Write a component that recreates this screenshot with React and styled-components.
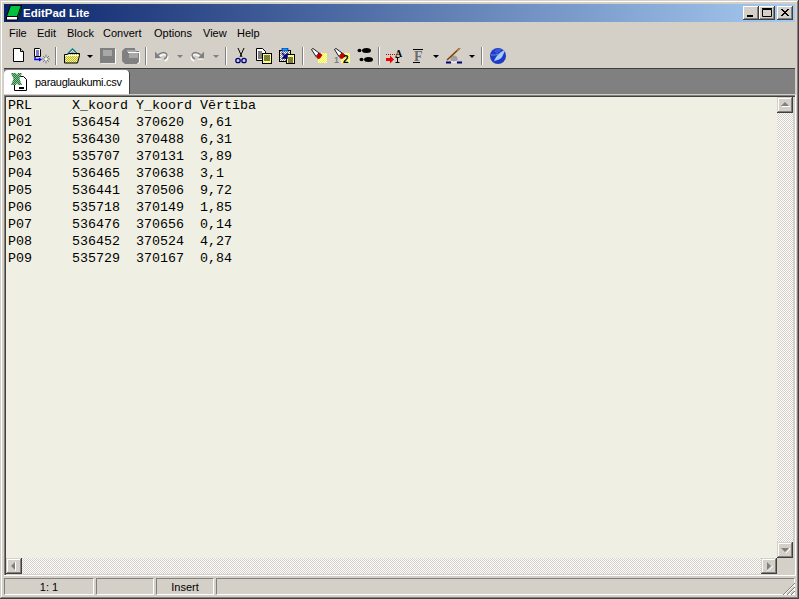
import React from "react";
import styled, { createGlobalStyle } from "styled-components";

const FACE = "#d4d0c8";
const SHADOW = "#808080";
const DARK = "#404040";
const UI_FONT = `"Liberation Sans", Arial, sans-serif`;

const GlobalStyle = createGlobalStyle`
  html, body { margin: 0; padding: 0; background: ${FACE}; overflow: hidden; }
`;

const Window = styled.div`
  box-sizing: border-box;
  width: 799px;
  height: 599px;
  padding: 4px 3px 3px 4px;
  display: flex;
  flex-direction: column;
  background: ${FACE};
  font-family: ${UI_FONT};
  font-size: 11px;
  color: #000;
  box-shadow: inset -1px -1px ${DARK}, inset 1px 1px ${FACE}, inset -2px -2px ${SHADOW}, inset 2px 2px #fff;
`;

const TitleBar = styled.div`
  height: 18px;
  margin-right: 1px;
  display: flex;
  align-items: center;
  padding: 0 2px;
  background: linear-gradient(90deg, #0a246a, #a6caf0);
  color: #fff;
  font-weight: bold;
  font-size: 11.5px;
`;

const TitleText = styled.span`
  margin-left: 1px;
  flex: 1;
`;

const CaptionButtons = styled.div`
  display: flex;
`;

const CaptionButton = styled.div`
  width: 16px;
  height: 14px;
  margin-left: ${(p) => p.$gap}px;
  background: ${FACE};
  box-shadow: inset -1px -1px ${DARK}, inset 1px 1px #fff, inset -2px -2px ${SHADOW};
`;

const MenuBar = styled.div`
  height: 22px;
  display: flex;
  align-items: center;
  padding-left: 5px;
`;

const MenuItem = styled.span`
  width: ${(p) => p.$w}px;
  line-height: 20px;
`;

const Toolbar = styled.div`
  height: 24px;
  display: flex;
  align-items: center;
  padding-left: 3px;
`;

const ToolButton = styled.div`
  width: 23px;
  height: 24px;
  display: flex;
  align-items: center;
  justify-content: center;
`;

const DropSlot = styled.div`
  width: 13px;
  height: 24px;
  display: flex;
  align-items: center;
  justify-content: center;
`;

const DropArrow = styled.i`
  display: block;
  width: 0;
  height: 0;
  border-left: 3px solid transparent;
  border-right: 3px solid transparent;
  border-top: 3px solid ${(p) => (p.$off ? SHADOW : "#000")};
`;

const Separator = styled.div`
  box-sizing: border-box;
  width: 2px;
  height: 18px;
  margin-left: ${(p) => p.$l}px;
  margin-right: ${(p) => p.$r}px;
  border-left: 1px solid ${SHADOW};
  border-right: 1px solid #fff;
`;

const Glyph = styled.svg`
  display: block;
  width: ${(p) => p.$w || 16}px;
  height: ${(p) => p.$h || 16}px;
  flex: none;
`;

const MirrorGlyph = styled(Glyph)`
  transform: ${(p) => (p.$flip ? "scaleX(-1)" : "none")};
`;

const TabStrip = styled.div`
  height: 24px;
  margin-right: 1px;
  padding-top: 1px;
  background: ${SHADOW};
  border-top: 1px solid ${DARK};
  border-bottom: 1px solid ${FACE};
  display: flex;
`;

const Tab = styled.div`
  width: 126px;
  display: flex;
  align-items: center;
  padding-left: 7px;
  box-sizing: border-box;
  background: #fff;
  border-radius: 4px 4px 0 0;
  border-right: 1px solid ${DARK};
`;

const TabLabel = styled.span`
  margin-left: 8px;
  letter-spacing: -0.3px;
  white-space: nowrap;
`;

const EditorFrame = styled.div`
  box-sizing: border-box;
  height: 481px;
  padding: 2px 3px 2px 2px;
  display: grid;
  grid-template-columns: 1fr 16px;
  grid-template-rows: 1fr 16px;
  background: ${FACE};
  box-shadow: inset -1px -1px #fff, inset 1px 1px ${SHADOW}, inset 2px 2px ${DARK};
`;

const TextPane = styled.div`
  background: #eff0e3;
  padding-left: 2px;
  overflow: hidden;
  font-family: "Liberation Mono", "Courier New", monospace;
  font-size: 13.33px;
  line-height: 17px;
`;

const TextLine = styled.div`
  display: grid;
  grid-template-columns: repeat(4, 64px);
  height: 17px;
  white-space: pre;
`;

const ScrollTrack = styled.div`
  display: flex;
  flex-direction: ${(p) => (p.$vertical ? "column" : "row")};
  justify-content: space-between;
  background: repeating-conic-gradient(#fff 0% 25%, ${FACE} 0% 50%) 0 0 / 2px 2px;
`;

const ScrollButton = styled.div`
  width: 16px;
  height: 16px;
  background: ${FACE};
  box-shadow: inset -1px -1px ${DARK}, inset 1px 1px ${FACE}, inset -2px -2px ${SHADOW}, inset 2px 2px #fff;
`;

const StatusBar = styled.div`
  position: relative;
  height: 17px;
  margin: 2px 1px 0 0;
  display: flex;
  gap: 2px;
`;

const StatusPanel = styled.div`
  box-sizing: border-box;
  width: ${(p) => (p.$w ? `${p.$w}px` : "auto")};
  flex: ${(p) => (p.$w ? "none" : 1)};
  line-height: 16px;
  text-align: center;
  border: 1px solid;
  border-color: ${SHADOW} #fff #fff ${SHADOW};
`;

const SizeGrip = styled.svg`
  position: absolute;
  right: 0;
  bottom: 0;
  width: 13px;
  height: 13px;
`;

const Dither = ({ id, a = "#fff", b = "#ffff00" }) => (
  <pattern id={id} width="2" height="2" patternUnits="userSpaceOnUse">
    <rect width="2" height="2" fill={a} />
    <rect width="1" height="1" fill={b} />
    <rect x="1" y="1" width="1" height="1" fill={b} />
  </pattern>
);

const Icon = ({ children, w, h }) => (
  <Glyph $w={w} $h={h} viewBox={`0 0 ${w || 16} ${h || 16}`}>{children}</Glyph>
);

const NewIcon = () => (
  <Icon>
    <path d="M2.5.5h7l3 3v10h-10z" fill="#fff" stroke="#000" />
    <path d="M9.5.5v3h3" fill="#d4d0c8" stroke="#000" />
  </Icon>
);

const OpenRemoteIcon = () => (
  <Icon>
    <path d="M.5.5h5l1 1v7h-6z" fill="#fff" stroke="#000" />
    <path d="M2 3h3M2 5h3M2 7h3" stroke="#000080" />
    <path d="M1 9v2.5h5" fill="none" stroke="#0000ff" strokeWidth="1.4" />
    <path d="M5 9.5l3 2-3 2z" fill="#0000ff" />
    <path d="M12 6.5v9M7.5 11h9M9 8l6 6M15 8l-6 6" stroke="#808080" />
    <circle cx="12" cy="11" r="1.5" fill="#fff" />
  </Icon>
);

const FolderIcon = () => (
  <Icon>
    <defs><Dither id="fold" a="#ffff60" b="#b0b060" /></defs>
    <path d="M3.5 6L8.5 1 13.5 6" fill="#fff" stroke="#008080" strokeWidth="1.3" />
    <path d="M6 5L8.5 3 11 5z" fill="#a0a0a0" />
    <path d="M.5 6.5h3l1-1h11v2l-2 7.5h-13z" fill="url(#fold)" stroke="#000" />
    <path d="M1 7.5h13" stroke="#fff" />
  </Icon>
);

const SaveIcon = () => (
  <Icon>
    <rect x="0" y="0" width="15" height="15" fill="#808080" />
    <rect x="3" y="2" width="9" height="6" fill="#a8a8a8" />
    <path d="M15.5 1v15H1" fill="none" stroke="#fff" />
  </Icon>
);

const SaveAllIcon = () => (
  <Glyph $w={18} viewBox="0 0 18 16">
    <path d="M0 3l3-3h10v3h4v11l-2 2H3l-3-3z" fill="#808080" />
    <rect x="5" y="2" width="9" height="2" fill="#a8a8a8" />
    <rect x="7" y="5" width="9" height="5" fill="#a8a8a8" />
    <path d="M6 4.5h11" stroke="#fff" />
    <path d="M17.5 4v10l-2 2" fill="none" stroke="#fff" />
  </Glyph>
);

const UndoIcon = ({ flip }) => (
  <MirrorGlyph $w={15} $flip={flip} viewBox="0 0 15 16">
    <path d="M4 8c3-3 7-3 8.5-1 1 2-.5 4-2.5 5" fill="none" stroke="#fff" strokeWidth="1.5" transform="translate(.8 1)" />
    <path d="M4 7c3-3 7-3 8.5-1 1 2-.5 4-2.5 5" fill="none" stroke="#808080" strokeWidth="1.5" />
    <path d="M1 3.5v7h6.5z" fill="#808080" />
    <path d="M1.5 11h6" stroke="#fff" />
  </MirrorGlyph>
);

const CutIcon = () => (
  <Icon>
    <path d="M5 0l4 9M11 0L7 9" stroke="#000" />
    <circle cx="5" cy="12.5" r="2.2" fill="none" stroke="#000080" strokeWidth="1.3" />
    <circle cx="11" cy="12.5" r="2.2" fill="none" stroke="#000080" strokeWidth="1.3" />
  </Icon>
);

const CopyIcon = () => (
  <Icon>
    <defs><Dither id="cp" /></defs>
    <path d="M.5.5h6l3 3v9h-9z" fill="#fff" stroke="#000" />
    <path d="M2 4h4M2 6h4M2 8h4M2 10h4" stroke="#000" />
    <rect x="6.5" y="5.5" width="9" height="10" fill="url(#cp)" stroke="#000" />
    <path d="M8 8h6M8 10h6M8 12h6" stroke="#000" />
  </Icon>
);

const PasteIcon = () => (
  <Icon>
    <defs><Dither id="ps" a="#fff" b="#808080" /><Dither id="ps2" /></defs>
    <rect x=".5" y="2.5" width="11" height="11" fill="url(#ps)" stroke="#000" />
    <rect x="3" y="0" width="6" height="3" fill="#00a0ff" stroke="#000080" strokeWidth=".6" />
    <rect x="7.5" y="6.5" width="8" height="9" fill="url(#ps2)" stroke="#000" />
    <path d="M9 10h5M9 12h5M9 14h5" stroke="#000" />
    <path d="M3 5l4 4M8 6v4H4z" stroke="#000080" strokeWidth="1.5" fill="#000080" />
  </Icon>
);

const Torch = () => (
  <>
    <path d="M.5 1.5L2 .5l6 4.5-3 3.5z" fill="#fff" stroke="#000" strokeWidth=".9" />
    <path d="M5 9l3.5-4.500L11.5 7l-2.5 3.5-2 .5z" fill="#c00000" />
  </>
);

const FindIcon = () => (
  <Icon>
    <defs><Dither id="f1" /></defs>
    <path d="M10 5h6v10H7V9z" fill="url(#f1)" />
    <Torch />
  </Icon>
);

const Find2Icon = () => (
  <Icon>
    <defs><Dither id="f2" /></defs>
    <path d="M10 5h6v10H7V9z" fill="url(#f2)" />
    <Torch />
    <text x="0" y="15" fontFamily="Liberation Sans" fontWeight="bold" fontSize="9" fill="#808080">1</text>
    <text x="9" y="15" fontFamily="Liberation Sans" fontWeight="bold" fontSize="10" fill="#000">2</text>
  </Icon>
);

const StepsIcon = () => (
  <Icon>
    <ellipse cx="2.5" cy="2.5" rx="2" ry="1.8" />
    <ellipse cx="9.5" cy="2.5" rx="4.5" ry="2.5" />
    <ellipse cx="4.5" cy="11.5" rx="2" ry="1.8" />
    <ellipse cx="11.5" cy="11.5" rx="4.5" ry="2.5" />
  </Icon>
);

const FontAIcon = () => (
  <Glyph $w={18} viewBox="0 0 18 16">
    <text x="9" y="9" fontFamily="Liberation Serif" fontWeight="bold" fontSize="10" fill="#000">A</text>
    <path d="M0 6.5h9" stroke="#c00000" strokeDasharray="1 1" />
    <path d="M9.5 9.5h4M11.5 9.5v5M9.5 14.5h4" stroke="#000" />
    <path d="M0 10h4V7.5l4 4-4 4V13H0z" fill="#f00000" />
  </Glyph>
);

const FontFIcon = () => (
  <Icon>
    <path d="M3 1.5h10M3 14.5h7" stroke="#000" />
    <text x="4" y="13" fontFamily="Liberation Serif" fontWeight="bold" fontSize="14" fill="#6c6c6c">F</text>
  </Icon>
);

const BrushIcon = () => (
  <Icon>
    <circle cx="8" cy="11" r="3.5" fill="#a0a0a0" />
    <path d="M1 12L14 0" stroke="#804000" strokeWidth="1.6" />
    <path d="M14 0l-3 3" stroke="#c08040" />
    <path d="M5.5 13a3 3 0 0 0 5 0" fill="none" stroke="#fff" strokeWidth="1.3" />
    <path d="M0 14.5h5M11 14.5h5" stroke="#000080" strokeWidth="2" />
  </Icon>
);

const GlobeIcon = () => (
  <Icon>
    <circle cx="8" cy="8" r="8" fill="#1c3cc8" />
    <path d="M4 3a7 7 0 0 1 8-1.5L7 6z" fill="#3858d8" />
    <path d="M15 2C11 3 6 8 4 13c3-1 6-1 8-4 1-2 2-4 3-7z" fill="#a8ccf4" />
    <path d="M1 7c3 0 6 0 8-1" stroke="#7090e0" fill="none" />
  </Icon>
);

const AppIcon = () => (
  <Glyph viewBox="0 0 16 16">
    <path d="M4.5.5h11l-4 11H.5z" fill="#00c040" stroke="#000" />
    <path d="M.5 11.5h11v3.5H.5z" fill="#fff" stroke="#000" />
    <path d="M11.5 11.5l4-11v3l-4 11.5z" fill="#008030" stroke="#000" strokeWidth=".6" />
  </Glyph>
);

const CsvIcon = () => (
  <Glyph $h={18} viewBox="0 0 16 18">
    <defs><Dither id="xl" a="#1f7a3c" b="#88c090" /></defs>
    <path d="M3.5 3.5h9l3 3v11h-12z" fill="#fff" stroke="#000" />
    <path d="M0 0h5l1 2 1-2h4L8.500 6l2.500 6H7l-1-2-1 2H0l2.500-6z" fill="url(#xl)" />
    <path d="M8 14h5v2H8z" fill="#000" />
  </Glyph>
);

const CaptionIcon = ({ kind }) => (
  <Glyph $w={16} $h={14} viewBox="0 0 16 14">
    {kind === "min" && <rect x="4" y="9" width="6" height="2" fill="#000" />}
    {kind === "max" && <path d="M3.5 3.5h9v7h-9zM3 2.5h10" fill="none" stroke="#000" />}
    {kind === "close" && <path d="M4 3l7 7M5 3l7 7M11 3l-7 7M12 3l-7 7" stroke="#000" />}
  </Glyph>
);

const ARROWS = {
  up: { tri: "8,5 4,9 12,9", hi: "M5 9.5h8" },
  down: { tri: "4,6 12,6 8,10", hi: "M9 10.5h1M10 9.5h1M11 8.5h1M12 7.5h1M13 6.5h-1" },
  left: { tri: "9,4 9,12 5,8", hi: "M9.5 4v9" },
  right: { tri: "6,4 6,12 10,8", hi: "M6.5 12.5h1M8 11.5h1M9 10.5h1M10 9.5h1M11 8.5h1" },
};

const ScrollArrow = ({ dir }) => (
  <ScrollButton>
    <Glyph viewBox="0 0 16 16">
      <polygon points={ARROWS[dir].tri} fill={SHADOW} />
      <path d={ARROWS[dir].hi} stroke="#fff" fill="none" />
    </Glyph>
  </ScrollButton>
);

const MENUS = [
  ["File", 28], ["Edit", 30], ["Block", 36], ["Convert", 51],
  ["Options", 49], ["View", 34], ["Help", 40],
];

const ROWS = [
  ["PRL", "X_koord", "Y_koord", "Vērtība"],
  ["P01", "536454", "370620", "9,61"],
  ["P02", "536430", "370488", "6,31"],
  ["P03", "535707", "370131", "3,89"],
  ["P04", "536465", "370638", "3,1"],
  ["P05", "536441", "370506", "9,72"],
  ["P06", "535718", "370149", "1,85"],
  ["P07", "536476", "370656", "0,14"],
  ["P08", "536452", "370524", "4,27"],
  ["P09", "535729", "370167", "0,84"],
];

function App() {
  return (
    <Window>
      <GlobalStyle />
      <TitleBar>
        <AppIcon />
        <TitleText>EditPad Lite</TitleText>
        <CaptionButtons>
          <CaptionButton $gap={0}><CaptionIcon kind="min" /></CaptionButton>
          <CaptionButton $gap={0}><CaptionIcon kind="max" /></CaptionButton>
          <CaptionButton $gap={2}><CaptionIcon kind="close" /></CaptionButton>
        </CaptionButtons>
      </TitleBar>

      <MenuBar>
        {MENUS.map(([label, w]) => (
          <MenuItem key={label} $w={w}>{label}</MenuItem>
        ))}
      </MenuBar>

      <Toolbar>
        <ToolButton><NewIcon /></ToolButton>
        <ToolButton><OpenRemoteIcon /></ToolButton>
        <Separator $l={2} $r={3} />
        <ToolButton><FolderIcon /></ToolButton>
        <DropSlot><DropArrow /></DropSlot>
        <ToolButton><SaveIcon /></ToolButton>
        <ToolButton><SaveAllIcon /></ToolButton>
        <Separator $l={3} $r={3} />
        <ToolButton><UndoIcon /></ToolButton>
        <DropSlot><DropArrow $off /></DropSlot>
        <ToolButton><UndoIcon flip /></ToolButton>
        <DropSlot><DropArrow $off /></DropSlot>
        <Separator $l={3} $r={2} />
        <ToolButton><CutIcon /></ToolButton>
        <ToolButton><CopyIcon /></ToolButton>
        <ToolButton><PasteIcon /></ToolButton>
        <Separator $l={4} $r={3} />
        <ToolButton><FindIcon /></ToolButton>
        <ToolButton><Find2Icon /></ToolButton>
        <ToolButton><StepsIcon /></ToolButton>
        <Separator $l={2} $r={3} />
        <ToolButton><FontAIcon /></ToolButton>
        <ToolButton><FontFIcon /></ToolButton>
        <DropSlot><DropArrow /></DropSlot>
        <ToolButton><BrushIcon /></ToolButton>
        <DropSlot><DropArrow /></DropSlot>
        <Separator $l={3} $r={3} />
        <ToolButton><GlobeIcon /></ToolButton>
      </Toolbar>

      <TabStrip>
        <Tab>
          <CsvIcon />
          <TabLabel>parauglaukumi.csv</TabLabel>
        </Tab>
      </TabStrip>

      <EditorFrame>
        <TextPane>
          {ROWS.map((row) => (
            <TextLine key={row[0]}>
              {row.map((cell) => <span key={cell}>{cell}</span>)}
            </TextLine>
          ))}
        </TextPane>
        <ScrollTrack $vertical>
          <ScrollArrow dir="up" />
          <ScrollArrow dir="down" />
        </ScrollTrack>
        <ScrollTrack>
          <ScrollArrow dir="left" />
          <ScrollArrow dir="right" />
        </ScrollTrack>
      </EditorFrame>

      <StatusBar>
        <StatusPanel $w={90}>1: 1</StatusPanel>
        <StatusPanel $w={58} />
        <StatusPanel $w={58}>Insert</StatusPanel>
        <StatusPanel />
        <SizeGrip viewBox="0 0 13 13">
          <path d="M13 1L1 13M13 5L5 13M13 9L9 13" stroke="#808080" fill="none" />
          <path d="M13 2L2 13M13 6L6 13M13 10L10 13" stroke="#fff" fill="none" />
        </SizeGrip>
      </StatusBar>
    </Window>
  );
}

export default App;
